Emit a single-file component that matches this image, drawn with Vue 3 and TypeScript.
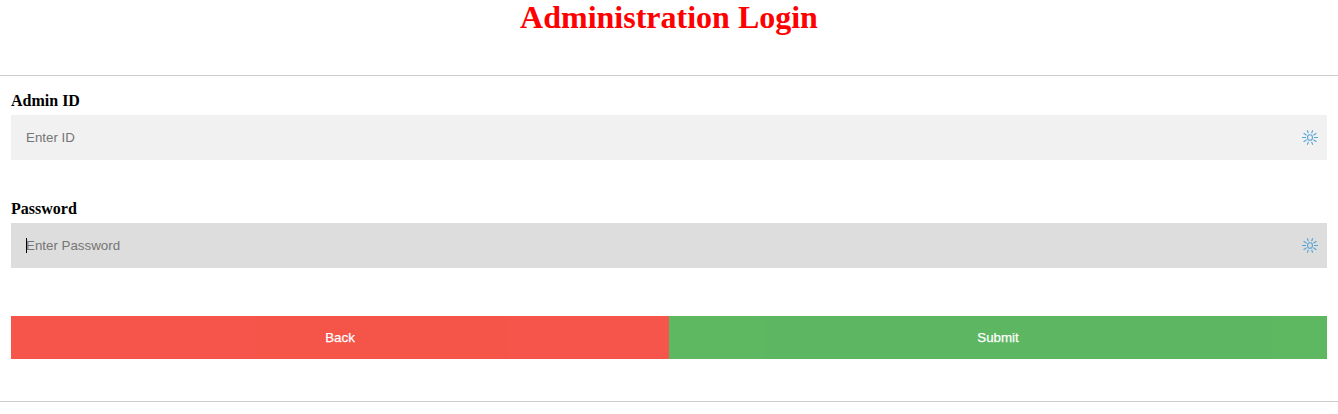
<script setup lang="ts">
import { ref } from 'vue'

interface Field {
  id: string
  label: string
  placeholder: string
  type: string
}

const fields: Field[] = [
  { id: 'admin-id', label: 'Admin ID', placeholder: 'Enter ID', type: 'text' },
  { id: 'password', label: 'Password', placeholder: 'Enter Password', type: 'password' },
]

const values = ref<Record<string, string>>({ 'admin-id': '', password: '' })
const active = ref('password')
</script>

<template>
  <main class="page">
    <h1 class="title">Administration Login</h1>
    <form class="login" @submit.prevent>
      <div v-for="field in fields" :key="field.id" class="field">
        <label class="label" :for="field.id">{{ field.label }}</label>
        <div class="control" :class="{ active: active === field.id }">
          <input
            :id="field.id"
            v-model="values[field.id]"
            class="input"
            :type="field.type"
            :placeholder="field.placeholder"
            autocomplete="off"
            @focus="active = field.id"
          />
          <span v-if="active === field.id && !values[field.id]" class="caret"></span>
          <svg class="icon" width="16" height="15" viewBox="0 0 16 15" aria-hidden="true">
            <ellipse cx="8" cy="7.5" rx="2.5" ry="2.8" />
            <path d="M0 7.5H4M12 7.5H16M5.3 .2L6.4 3.2M10.7 .2L9.6 3.2M5.3 14.8L6.4 11.8M10.7 14.8L9.6 11.8M1.6 3.2L4.6 5.2M14.4 3.2L11.4 5.2M1.6 11.8L4.6 9.8M14.4 11.8L11.4 9.8" />
          </svg>
        </div>
      </div>
      <div class="actions">
        <button class="button back" type="button">Back</button>
        <button class="button submit" type="submit">Submit</button>
      </div>
    </form>
  </main>
</template>

<style>
body {
  margin: 0;
  background: #fff;
}
</style>

<style scoped>
.page {
  font-family: "Liberation Serif", "Times New Roman", serif;
  color: #000;
}
.title {
  margin: 0;
  height: 75px;
  font-size: 32px;
  line-height: 34px;
  text-align: center;
  color: #f00;
}
.login {
  box-sizing: border-box;
  height: 327px;
  padding: 16px 11px 0;
  border-top: 1px solid #ccc;
  border-bottom: 1px solid #ccc;
}
.field {
  height: 108px;
}
.label {
  display: block;
  height: 23px;
  font-size: 16px;
  line-height: 18px;
  font-weight: bold;
}
.control {
  position: relative;
  display: flex;
  align-items: center;
  height: 45px;
  background: #f1f1f1;
}
.control.active {
  background: #ddd;
}
.input {
  flex: 1;
  min-width: 0;
  height: 45px;
  box-sizing: border-box;
  padding: 15px;
  border: none;
  outline: none;
  background: transparent;
  font: 13.3333px "Liberation Sans", Arial, sans-serif;
}
.input::placeholder {
  color: #757575;
  opacity: 1;
}
.caret {
  position: absolute;
  left: 15px;
  top: 15px;
  width: 1px;
  height: 15px;
  background: #000;
}
.icon {
  flex: none;
  margin-right: 9px;
  fill: none;
  stroke: #5ba5d6;
  stroke-width: 1.1;
}
.actions {
  display: flex;
  margin-top: 8px;
}
.button {
  flex: 1;
  height: 43px;
  padding: 0;
  border: none;
  color: #fff;
  font: 13.3333px "Liberation Sans", Arial, sans-serif;
  -webkit-text-stroke: 0.25px #fff;
  opacity: 0.9;
  cursor: pointer;
}
.back {
  background: #f44336;
}
.submit {
  background: #4caf50;
}
</style>
